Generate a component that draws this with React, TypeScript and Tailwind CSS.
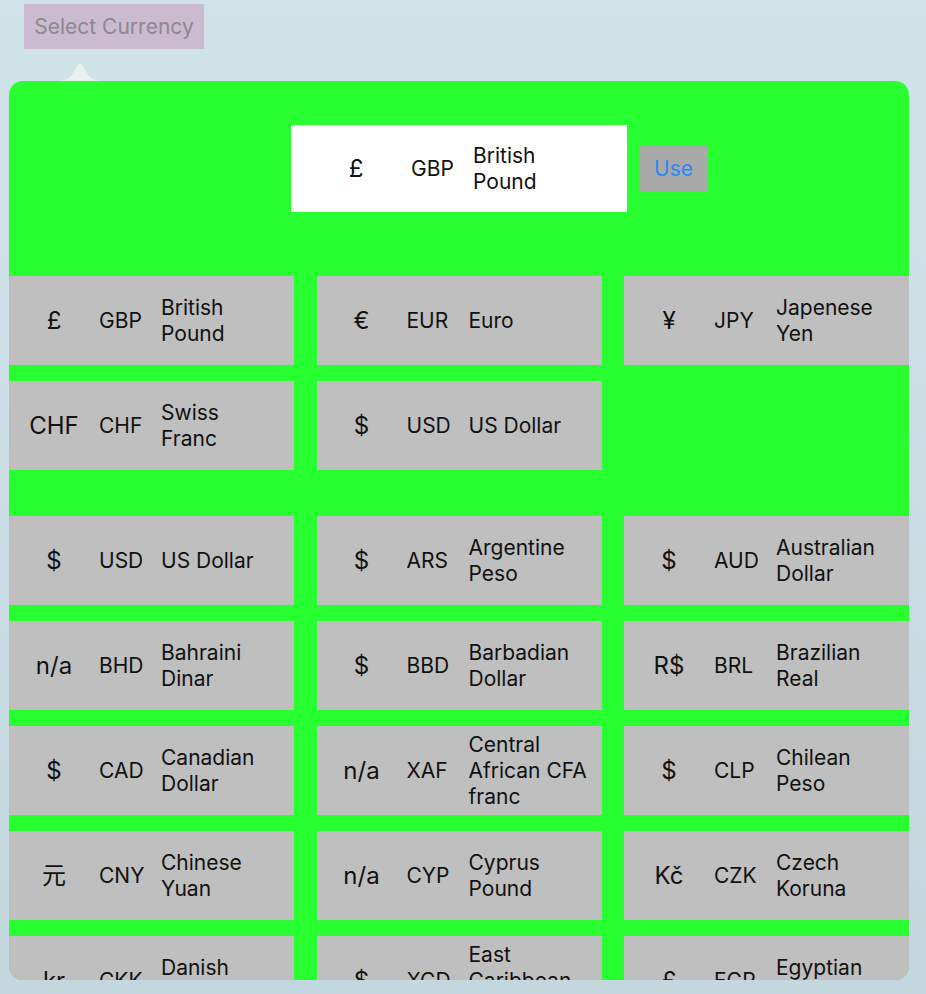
type Currency = { symbol: string; code: string; name: string };

const favourites: Currency[] = [
  { symbol: "£", code: "GBP", name: "British\nPound" },
  { symbol: "€", code: "EUR", name: "Euro" },
  { symbol: "¥", code: "JPY", name: "Japenese\nYen" },
  { symbol: "CHF", code: "CHF", name: "Swiss\nFranc" },
  { symbol: "$", code: "USD", name: "US Dollar" },
];

const all: Currency[] = [
  { symbol: "$", code: "USD", name: "US Dollar" },
  { symbol: "$", code: "ARS", name: "Argentine\nPeso" },
  { symbol: "$", code: "AUD", name: "Australian\nDollar" },
  { symbol: "n/a", code: "BHD", name: "Bahraini\nDinar" },
  { symbol: "$", code: "BBD", name: "Barbadian\nDollar" },
  { symbol: "R$", code: "BRL", name: "Brazilian\nReal" },
  { symbol: "$", code: "CAD", name: "Canadian\nDollar" },
  { symbol: "n/a", code: "XAF", name: "Central\nAfrican CFA\nfranc" },
  { symbol: "$", code: "CLP", name: "Chilean\nPeso" },
  { symbol: "元", code: "CNY", name: "Chinese\nYuan" },
  { symbol: "n/a", code: "CYP", name: "Cyprus\nPound" },
  { symbol: "Kč", code: "CZK", name: "Czech\nKoruna" },
  { symbol: "kr", code: "CKK", name: "Danish\nKrone" },
  { symbol: "$", code: "XCD", name: "East\nCaribbean\nDollar" },
  { symbol: "£", code: "EGP", name: "Egyptian\nPound" },
];

function CurrencyCell({ c }: { c: Currency }) {
  return (
    <div className="h-[89px] bg-[#bfbfbf] flex items-center">
      <div className="w-[90px] shrink-0 text-center text-[24px]">{c.symbol}</div>
      <div className="w-[62px] shrink-0">{c.code}</div>
      <div className="whitespace-pre-line leading-[26px]">{c.name}</div>
    </div>
  );
}

export default function App() {
  return (
    <div
      className="w-[926px] h-[994px] overflow-hidden bg-gradient-to-b from-[#cfe3e9] to-[#c3d7de] text-[21px] text-[#111]"
      style={{ fontFamily: "Inter, 'Noto Sans CJK SC', sans-serif" }}
    >
      {/* trigger */}
      <div className="pt-[4px] pl-[24px]">
        <button className="h-[45px] w-[180px] bg-[#cbbad0] text-[#8b898e] text-[21px] text-center">
          Select Currency
        </button>
      </div>

      {/* popover arrow */}
      <div className="h-[32px] flex items-end pl-[58px]">
        <svg width="44" height="21" viewBox="0 0 44 21">
          <path d="M0 21 C10 21 14 16 18 8 Q22 0 26 8 C30 16 34 21 44 21 Z" fill="#e7f1f4" />
        </svg>
      </div>

      {/* popover */}
      <div className="ml-[9px] w-[900px] h-[899px] rounded-[14px] overflow-hidden bg-[#27ff30]">
        <div className="h-[195px] pt-[44px]">
          <div className="grid grid-cols-[1fr_auto_1fr] items-center">
            <div />
            <div className="w-[336px] h-[87px] bg-white flex items-center">
              <div className="w-[120px] shrink-0 text-center pl-[10px] text-[24px]">£</div>
              <div className="w-[62px] shrink-0">GBP</div>
              <div className="whitespace-pre-line leading-[26px]">{"British\nPound"}</div>
            </div>
            <div className="pl-[12px]">
              <button className="w-[69px] h-[45px] bg-[#a9a9a9] text-[#2f87f6]">Use</button>
            </div>
          </div>
        </div>

        <div className="grid grid-cols-3 gap-x-[22.5px] gap-y-[16px]">
          {favourites.map((c, i) => (
            <CurrencyCell key={i} c={c} />
          ))}
        </div>

        <div className="grid grid-cols-3 gap-x-[22.5px] gap-y-[16px] mt-[46px]">
          {all.map((c, i) => (
            <CurrencyCell key={i} c={c} />
          ))}
        </div>
      </div>
    </div>
  );
}
